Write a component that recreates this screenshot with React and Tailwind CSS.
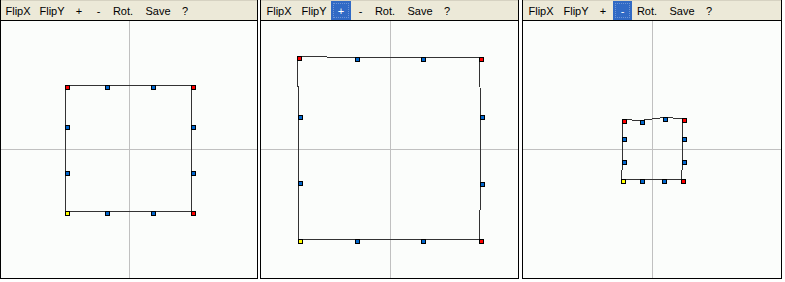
import { useState } from "react";

const buttons = [
    { id: "flipx", label: "FlipX", w: 35 },
    { id: "flipy", label: "FlipY", w: 34 },
    { id: "plus", label: "+", w: 20 },
    { id: "minus", label: "-", w: 19 },
    { id: "rot", label: "Rot.", w: 30 },
    { id: "save", label: "Save", w: 40 },
    { id: "help", label: "?", w: 14 },
];

const fills = { r: "#ff0000", b: "#0066cc", y: "#ffff00" };

// handle points are the top-left pixel of each 5x5 handle, in page coordinates
const panels = [
    {
        left: 0,
        width: 258,
        firstW: 34,
        active: null,
        crossX: 129,
        handles: [
            [65, 85, "r"], [105, 85, "b"], [151, 85, "b"], [191, 85, "r"],
            [191, 125, "b"], [191, 171, "b"], [191, 211, "r"],
            [151, 211, "b"], [105, 211, "b"], [65, 211, "y"],
            [65, 171, "b"], [65, 125, "b"],
        ],
    },
    {
        left: 260,
        width: 259,
        firstW: 36,
        active: "plus",
        crossX: 390,
        handles: [
            [297, 56, "r"], [355, 57, "b"], [421, 57, "b"], [479, 57, "r"],
            [480, 115, "b"], [480, 182, "b"], [479, 239, "r"],
            [421, 239, "b"], [355, 239, "b"], [298, 239, "y"],
            [298, 181, "b"], [298, 115, "b"],
        ],
    },
    {
        left: 522,
        width: 260,
        firstW: 36,
        active: "minus",
        crossX: 652,
        handles: [
            [622, 119, "r"], [640, 120, "b"], [663, 117, "b"], [682, 118, "r"],
            [682, 137, "b"], [682, 160, "b"], [681, 179, "r"],
            [662, 179, "b"], [640, 179, "b"], [621, 179, "y"],
            [622, 160, "b"], [622, 137, "b"],
        ],
    },
];

function Toolbar({ active, firstW, onPick }) {
    return (
        <div className="h-[21px] flex bg-[#ece9d8] border-t border-t-[#d6d2c2] border-b border-b-black">
            {buttons.map((b, i) => {
                const on = active === b.id;
                return (
                    <button
                        key={b.id}
                        onClick={() => onPick(b.id)}
                        style={{ width: i === 0 ? firstW : b.w }}
                        className={`relative h-[19px] pt-[1px] leading-[18px] text-[11px] text-center shrink-0 ${on ? "bg-[#316ac5] text-white" : "text-black"}`}>
                        {b.label}
                        {on && (
                            <span className="absolute inset-[2px] border border-dotted border-[#6f95d6]"></span>
                        )}
                    </button>
                );
            })}
        </div>
    );
}

function Panel({ panel }) {
    const [active, setActive] = useState(panel.active);
    const x0 = panel.left + 1;
    const w = panel.width - 2;
    const pts = panel.handles.map(([x, y]) => `${x + 0.5},${y + 0.5}`).join(" ");

    return (
        <div
            style={{ width: panel.width }}
            className="h-[279px] shrink-0 flex flex-col border-x border-b border-black bg-[#fbfdfb]">
            <Toolbar active={active} firstW={panel.firstW} onPick={(id) => setActive(active === id ? null : id)} />
            <svg
                width={w}
                height={257}
                viewBox={`${x0} 21 ${w} 257`}
                shapeRendering="crispEdges"
                className="block">
                <line x1={panel.crossX + 0.5} y1={21} x2={panel.crossX + 0.5} y2={278} stroke="#c0c0c0" strokeWidth="1" />
                <line x1={x0} y1={149.5} x2={x0 + w} y2={149.5} stroke="#c0c0c0" strokeWidth="1" />
                <polygon points={pts} fill="none" stroke="#333333" strokeWidth="1" />
                {panel.handles.map(([x, y, c], i) => (
                    <rect
                        key={i}
                        x={x + 0.5}
                        y={y + 0.5}
                        width="4"
                        height="4"
                        fill={fills[c]}
                        stroke="#000000"
                        strokeWidth="1" />
                ))}
            </svg>
        </div>
    );
}

export default function App() {
    return (
        <div className="w-[785px] h-[282px] bg-white flex font-['Tahoma','Liberation_Sans',sans-serif]">
            <Panel panel={panels[0]} />
            <div className="w-[2px] shrink-0"></div>
            <Panel panel={panels[1]} />
            <div className="w-[3px] shrink-0"></div>
            <Panel panel={panels[2]} />
        </div>
    );
}
